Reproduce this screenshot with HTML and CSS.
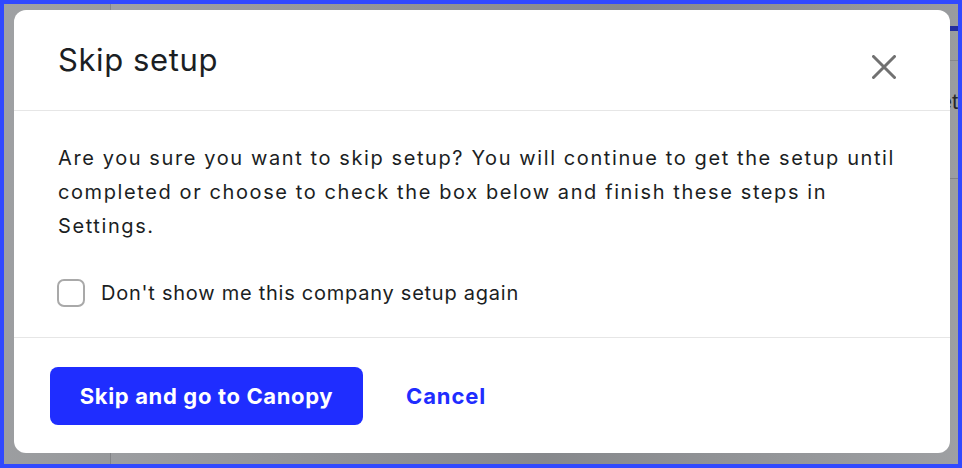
FILE: index.html
```html
<!DOCTYPE html>
<html lang="en">
<head>
<meta charset="utf-8">
<title>Skip setup</title>
<link rel="stylesheet" href="styles.css">
</head>
<body>
<div class="frame">
  <div class="page">
    <div class="sidebar"></div>
    <div class="main">
      <div class="topbar"><div class="accent"></div></div>
      <div class="crumb">Set</div>
    </div>
  </div>
  <div class="overlay">
    <div class="modal" role="dialog">
      <div class="modal-header">
        <h2 class="modal-title">Skip setup</h2>
        <button class="close" aria-label="Close">
          <svg width="24" height="24" viewBox="0 0 24 24"><path d="M1.5 1.5 L22.5 22.5 M22.5 1.5 L1.5 22.5" stroke="#717171" stroke-width="3" stroke-linecap="round" fill="none"/></svg>
        </button>
      </div>
      <div class="modal-body">
        <p class="message">Are you sure you want to skip setup? You will continue to get the setup until completed or choose to check the box below and finish these steps in Settings.</p>
        <label class="check-row">
          <span class="checkbox"></span>
          <span class="check-label">Don't show me this company setup again</span>
        </label>
      </div>
      <div class="modal-footer">
        <button class="btn-primary">Skip and go to Canopy</button>
        <button class="btn-link">Cancel</button>
      </div>
    </div>
  </div>
</div>
</body>
</html>
```
FILE: styles.css
```css
* { box-sizing: border-box; }
html, body { margin: 0; padding: 0; }
body {
  width: 962px;
  height: 468px;
  overflow: hidden;
  font-family: Inter, "Noto Sans", sans-serif;
}
.frame {
  position: relative;
  width: 962px;
  height: 468px;
  border: 4px solid #3149ff;
  overflow: hidden;
}
.page {
  display: flex;
  height: 100%;
  background: #ffffff;
}
.sidebar {
  width: 107px;
  border-right: 1px solid #d0d0d0;
  background: #f6f6f6;
}
.main { flex: 1; }
.topbar {
  height: 57px;
  border-bottom: 1px solid #d8d8d8;
  display: flex;
  justify-content: flex-end;
  padding-top: 22px;
}
.accent { width: 20px; height: 5px; background: #1f2eff; }
.crumb {
  text-align: right;
  font-family: "Liberation Sans", Arial, sans-serif;
  font-size: 22px;
  color: #222;
  padding-top: 28px;
  margin-right: 0;
  height: 118px;
  border-bottom: 1px solid #ccc;
}
.overlay {
  position: absolute;
  inset: 0;
  background: linear-gradient(100deg, rgba(40,44,50,0.42) 0%, rgba(40,44,50,0.56) 60%, rgba(40,44,50,0.45) 100%);
  display: flex;
  align-items: flex-start;
  padding: 6px 8px 0 10px;
}
.modal {
  width: 936px;
  height: 443px;
  background: #fff;
  border-radius: 12px;
  display: flex;
  flex-direction: column;
}
.modal-header {
  height: 101px;
  border-bottom: 1px solid #e6e6e6;
  display: flex;
  align-items: flex-start;
  justify-content: space-between;
  padding: 30px 54px 0 44px;
}
.modal-title {
  margin: 0;
  font-size: 31px;
  font-weight: 400;
  line-height: 40px;
  letter-spacing: 0.6px;
  color: #1b1e23;
}
.close {
  border: 0;
  background: none;
  padding: 0;
  margin-top: 15px;
  width: 24px;
  height: 24px;
  cursor: pointer;
}
.close svg { display: block; }
.modal-body {
  flex: 1;
  border-bottom: 1px solid #e6e6e6;
  padding: 30px 44px 0 44px;
}
.message {
  margin: 0;
  font-size: 20px;
  line-height: 34px;
  letter-spacing: 1.6px;
  color: #1b1e23;
}
.check-row {
  display: flex;
  align-items: center;
  gap: 16px;
  margin-top: 36px;
  margin-left: -1px;
}
.checkbox {
  width: 28px;
  height: 28px;
  border: 2.5px solid #a9a9a9;
  border-radius: 7px;
  background: #fff;
}
.check-label {
  font-size: 20px;
  letter-spacing: 0.75px;
  color: #1b1e23;
}
.modal-footer {
  height: 115px;
  display: flex;
  align-items: center;
  gap: 43px;
  padding: 0 36px 0 36px;
}
.btn-primary {
  height: 58px;
  width: 313px;
  border: 0;
  border-radius: 8px;
  background: #1f2dff;
  color: #fff;
  font-family: Inter, "Noto Sans", sans-serif;
  font-size: 22px;
  font-weight: 700;
  letter-spacing: 0.65px;
  cursor: pointer;
}
.btn-link {
  border: 0;
  background: none;
  padding: 0;
  color: #1f2dff;
  font-family: Inter, "Noto Sans", sans-serif;
  font-size: 22px;
  font-weight: 700;
  letter-spacing: 0.9px;
  cursor: pointer;
}
```
